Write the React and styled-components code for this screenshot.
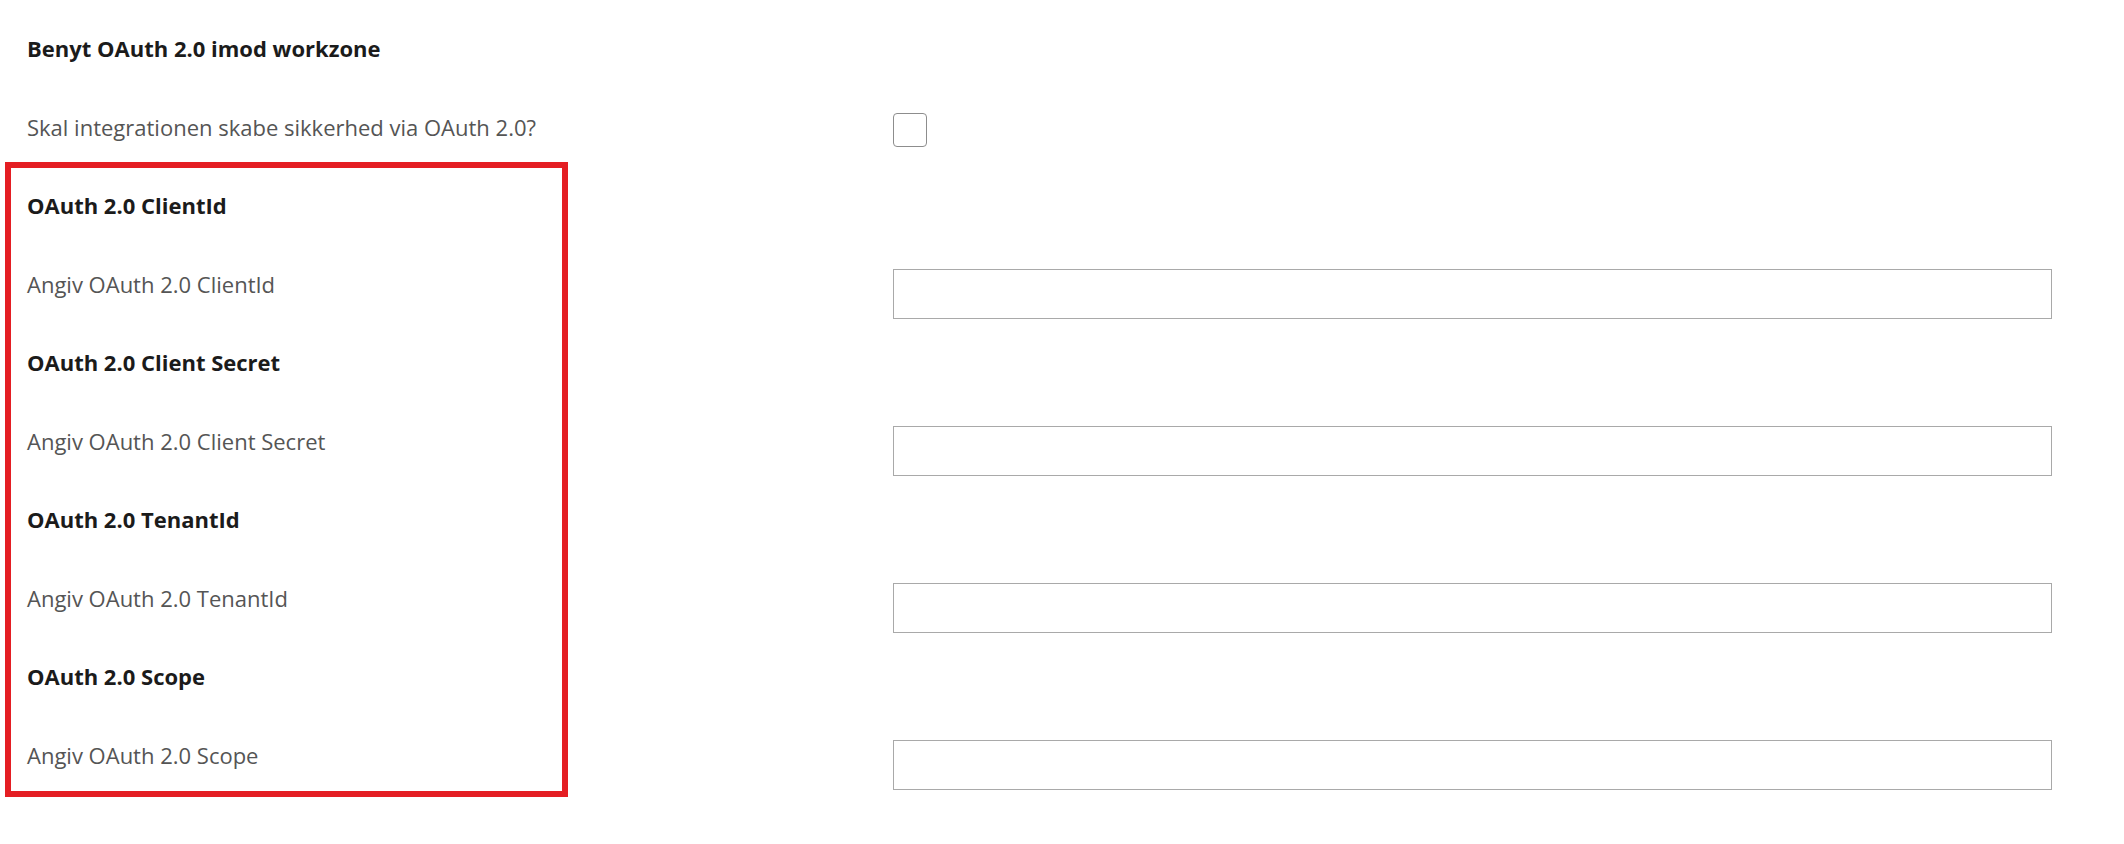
import styled, { createGlobalStyle } from "styled-components";

const GlobalStyle = createGlobalStyle`
  html, body {
    margin: 0;
    padding: 0;
    background: #fff;
  }

  body {
    font-family: "Open Sans", "Liberation Sans", sans-serif;
  }
`;

const Form = styled.form`
  position: relative;
  padding: 9px 0 0 27px;
  width: 2124px;
  height: 844px;
  box-sizing: border-box;
`;

const Heading = styled.div`
  display: flex;
  align-items: center;
  height: 78.5px;
  font-size: 22px;
  font-weight: 700;
  color: #1b1b1b;
`;

const FieldRow = styled.div`
  display: grid;
  grid-template-columns: 866px 1159px;
  height: 78.5px;
`;

const Label = styled.label`
  align-self: center;
  font-size: 22px;
  font-weight: 400;
  color: #555;
`;

const Checkbox = styled.input.attrs({ type: "checkbox" })`
  appearance: none;
  margin: 25.5px 0 0;
  align-self: start;
  width: 34px;
  height: 34px;
  box-sizing: border-box;
  border: 1.5px solid #8d8d8d;
  border-radius: 4px;
  background: #fff;
`;

const TextInput = styled.input.attrs({ type: "text" })`
  margin: 24.5px 0 0;
  align-self: start;
  width: 1159px;
  height: 50px;
  box-sizing: border-box;
  border: 1.5px solid #a9a9a9;
  border-radius: 0;
  background: #fff;
  font: inherit;
  font-size: 19.5px;
  padding: 0 12px;
`;

const Highlight = styled.div`
  position: absolute;
  top: 162px;
  left: 5px;
  width: 563px;
  height: 635px;
  box-sizing: border-box;
  border: 6px solid #e41e23;
  pointer-events: none;
`;

const fields = [
  { title: "OAuth 2.0 ClientId", label: "Angiv OAuth 2.0 ClientId" },
  { title: "OAuth 2.0 Client Secret", label: "Angiv OAuth 2.0 Client Secret" },
  { title: "OAuth 2.0 TenantId", label: "Angiv OAuth 2.0 TenantId" },
  { title: "OAuth 2.0 Scope", label: "Angiv OAuth 2.0 Scope" },
];

export default function App() {
  return (
    <>
      <GlobalStyle />
      <Form onSubmit={(e) => e.preventDefault()}>
        <Heading>Benyt OAuth 2.0 imod workzone</Heading>
        <FieldRow>
          <Label>Skal integrationen skabe sikkerhed via OAuth 2.0?</Label>
          <Checkbox />
        </FieldRow>

        {fields.map((f) => (
          <div key={f.title}>
            <Heading>{f.title}</Heading>
            <FieldRow>
              <Label>{f.label}</Label>
              <TextInput />
            </FieldRow>
          </div>
        ))}

        <Highlight />
      </Form>
    </>
  );
}
